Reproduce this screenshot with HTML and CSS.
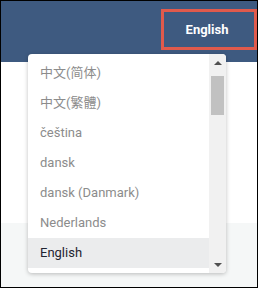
FILE: index.html
```html
<!DOCTYPE html>
<html lang="en">
<head>
    <meta charset="UTF-8">
    <meta name="viewport" content="width=device-width, initial-scale=1.0">
    <title>Language</title>
    <link rel="stylesheet" href="styles.css">
</head>
<body>
    <div class="frame">
        <!-- top bar with the current language -->
        <div class="header">
            <div class="current">English</div>
        </div>
        <div class="content"></div>
        <div class="footer"></div>

        <!-- language menu, opened over the page -->
        <div class="menu">
            <ul class="options">
                <li>中文(简体)</li>
                <li>中文(繁體)</li>
                <li>čeština</li>
                <li>dansk</li>
                <li>dansk (Danmark)</li>
                <li>Nederlands</li>
                <li class="active">English</li>
            </ul>
            <!-- scrollbar of the list -->
            <div class="scrollbar">
                <div class="arrow"><span class="up"></span></div>
                <div class="track"><div class="thumb"></div></div>
                <div class="arrow"><span class="down"></span></div>
            </div>
        </div>
    </div>
</body>
</html>
```

FILE: styles.css
```css
* {
    margin: 0;
    padding: 0;
    box-sizing: border-box;
}

body {
    font-family: Roboto, "Noto Sans CJK SC", sans-serif;
}

.frame {
    width: 258px;
    height: 288px;
    border: 1px solid #000;
    position: relative;
    display: flex;
    flex-direction: column;
}

.header {
    height: 61px;
    background-color: #3e5a80;
    display: flex;
    justify-content: flex-end;
    align-items: flex-start;
    padding-top: 8px;
}

/* 当前语言，红框圈出 */
.current {
    width: 96px;
    height: 41px;
    border: 3px solid #e05a4c;
    color: #fff;
    font-weight: bold;
    font-size: 13px;
    display: flex;
    align-items: center;
    justify-content: center;
    padding-right: 4px;
}

.content {
    height: 161px;
    background-color: #fff;
}

.footer {
    flex: 1;
    background-color: #f5f7f7;
}

.menu {
    position: absolute;
    left: 27px;
    top: 53px;
    width: 198px;
    height: 219px;
    background-color: #fff;
    border-radius: 4px;
    box-shadow: 0 1px 4px rgba(0, 0, 0, 0.25);
    overflow: hidden;
    display: flex;
}

.options {
    flex: 1;
    list-style: none;
    padding-top: 4px;
}

.options li {
    height: 30px;
    line-height: 30px;
    padding-left: 12px;
    font-size: 13px;
    color: #8c8c8c;
    white-space: nowrap;
}

.options li.active {
    background-color: #ebeced;
    color: #1f2430;
}

.scrollbar {
    width: 17px;
    background-color: #f1f1f1;
    display: flex;
    flex-direction: column;
}

.arrow {
    height: 17px;
    display: flex;
    align-items: center;
    justify-content: center;
}

.up {
    border-left: 4px solid transparent;
    border-right: 4px solid transparent;
    border-bottom: 4px solid #505050;
}

.down {
    border-left: 4px solid transparent;
    border-right: 4px solid transparent;
    border-top: 4px solid #505050;
}

.track {
    flex: 1;
    padding: 5px 2px 0;
}

.thumb {
    height: 39px;
    background-color: #c1c1c1;
}
```
